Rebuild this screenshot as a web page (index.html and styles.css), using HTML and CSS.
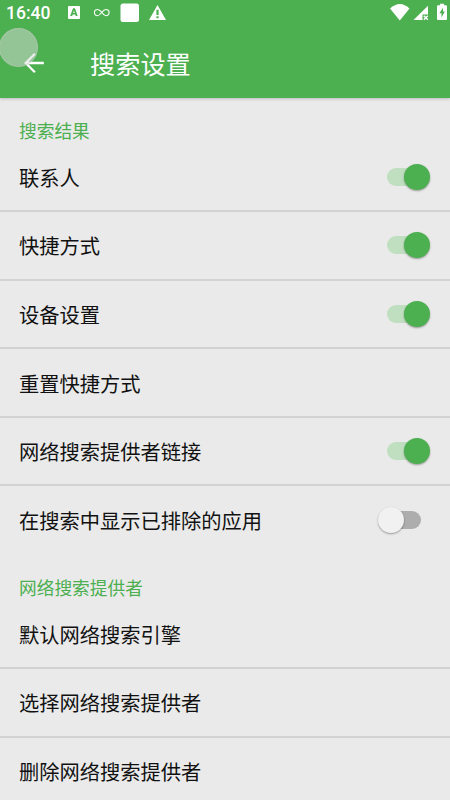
FILE: index.html
```html
<!DOCTYPE html>
<html lang="zh-CN">
<head>
<meta charset="utf-8">
<title>搜索设置</title>
<link rel="stylesheet" href="styles.css">
</head>
<body>
<header class="top">
  <div class="status">
    <span class="clock">16:40</span>
    <svg class="notices" width="104" height="28" viewBox="0 0 104 28" fill="#fff">
      <path fill-rule="evenodd" d="M5 6h10q1 0 1 1v11q0 1-1 1H5q-1 0-1-1V7q0-1 1-1zM9 8.300L6.200 16h2l.5-1.500h2.500l.5 1.500h2l-2.700-7.700zM9.200 13l.8-2.600.8 2.600z"/>
      <path d="M38 12.500C36.300 10.500 35.200 9.500 33.500 9.500a3.100 3.100 0 0 0 0 6.200c3.300 0 4.700-6.200 8.500-6.200a3.100 3.100 0 0 1 0 6.200c-1.700 0-2.800-1.200-4-3.200z" fill="none" stroke="#fff" stroke-width="1.100"/>
      <rect x="56.500" y="3.500" width="18.500" height="18.500" rx="2.500"/>
      <path fill-rule="evenodd" d="M93.500 5L102 20H85zM92.400 9.800v5.200h2.200v-5.200zm0 6.400v2h2.200v-2z"/>
    </svg>
    <svg class="signals" width="60" height="28" viewBox="0 0 60 28" fill="#fff">
      <path d="M0 8.500Q10-.5 19.500 8.500L9.800 20.500z"/>
      <path d="M38 5.800V14.500H32.500V20H23.500z"/>
      <path d="M33.800 15.700l4 4M37.800 15.700l-4 4" stroke="#fff" stroke-width="1.500"/>
      <path fill-rule="evenodd" d="M50 3.800h4V5.300h2q1 0 1 1V19q0 1-1 1h-8q-1 0-1-1V6.300q0-1 1-1h2zM53 7.800l-3.600 5.400h2.100v4.200l3.300-5.800h-1.800z"/>
    </svg>
  </div>
  <div class="bar">
    <svg class="back" width="22" height="22" viewBox="0 0 22 22" fill="none" stroke="#fff" stroke-width="2.300"><path d="M20.800 11H2.500M11.900 1.800L2.700 11l9.200 9.200"/></svg>
    <h1 class="title">搜索设置</h1>
  </div>
  <span class="touch"></span>
</header>
<main>
  <section class="group">
    <h2 class="heading">搜索结果</h2>
    <div class="row"><span class="label">联系人</span><i class="switch on"></i></div>
    <div class="row"><span class="label">快捷方式</span><i class="switch on"></i></div>
    <div class="row"><span class="label">设备设置</span><i class="switch on"></i></div>
    <div class="row"><span class="label">重置快捷方式</span></div>
    <div class="row"><span class="label">网络搜索提供者链接</span><i class="switch on"></i></div>
    <div class="row"><span class="label">在搜索中显示已排除的应用</span><i class="switch"></i></div>
  </section>
  <section class="group">
    <h2 class="heading">网络搜索提供者</h2>
    <div class="row"><span class="label">默认网络搜索引擎</span></div>
    <div class="row"><span class="label">选择网络搜索提供者</span></div>
    <div class="row"><span class="label">删除网络搜索提供者</span></div>
  </section>
</main>
</body>
</html>
```
FILE: styles.css
```css
* {
  box-sizing: border-box;
}

body {
  margin: 0;
  height: 800px;
  overflow: hidden;
  background: #eaeaea;
  color: #111;
  font-family: Roboto, "Noto Sans CJK SC", sans-serif;
}

.top {
  position: relative;
  height: 98px;
  background: #4caf50;
  color: #fff;
  box-shadow: 0 1px 3px rgba(0, 0, 0, 0.2);
}

.status {
  display: flex;
  height: 28px;
  padding-left: 6px;
}

.clock {
  width: 58px;
  font-size: 17.500px;
  font-weight: 500;
  line-height: 27px;
  white-space: nowrap;
}

.signals {
  margin-left: auto;
}

.bar {
  display: flex;
  align-items: center;
  height: 70px;
  padding-left: 23px;
}

.title {
  margin: 0 0 0 45px;
  padding-top: 5px;
  font-size: 25.200px;
  font-weight: 400;
  line-height: 36px;
}

.touch {
  position: absolute;
  top: 28px;
  left: -1px;
  width: 39px;
  height: 39px;
  border: 1px solid rgba(200, 200, 200, 0.4);
  border-radius: 50%;
  background: rgba(220, 220, 220, 0.5);
}

.heading {
  height: 45.500px;
  margin: 0;
  padding: 20.500px 19px 0;
  color: #4caf50;
  font-size: 17.700px;
  font-weight: 400;
  line-height: 26px;
}

.row {
  display: flex;
  align-items: center;
  justify-content: space-between;
  height: 68.600px;
  padding: 0 20px 0 19px;
  border-bottom: 2px solid #d2d2d2;
  font-size: 20.250px;
}

.row:last-child {
  border-bottom-color: transparent;
}

.label {
  padding-top: 4px;
  line-height: 30px;
}

.switch {
  position: relative;
  display: flex;
  align-items: center;
  width: 52px;
  height: 26px;
}

.switch::before {
  content: "";
  width: 34px;
  height: 18px;
  margin-left: 9px;
  border-radius: 9px;
  background: #adadad;
}

.switch::after {
  content: "";
  position: absolute;
  left: 0;
  width: 26px;
  height: 26px;
  border-radius: 50%;
  background: #f1f1f1;
  box-shadow: 0 1px 2px rgba(0, 0, 0, 0.35);
}

.switch.on::before {
  background: #bfdfc0;
}

.switch.on::after {
  left: 26px;
  background: #4caf50;
}
```
